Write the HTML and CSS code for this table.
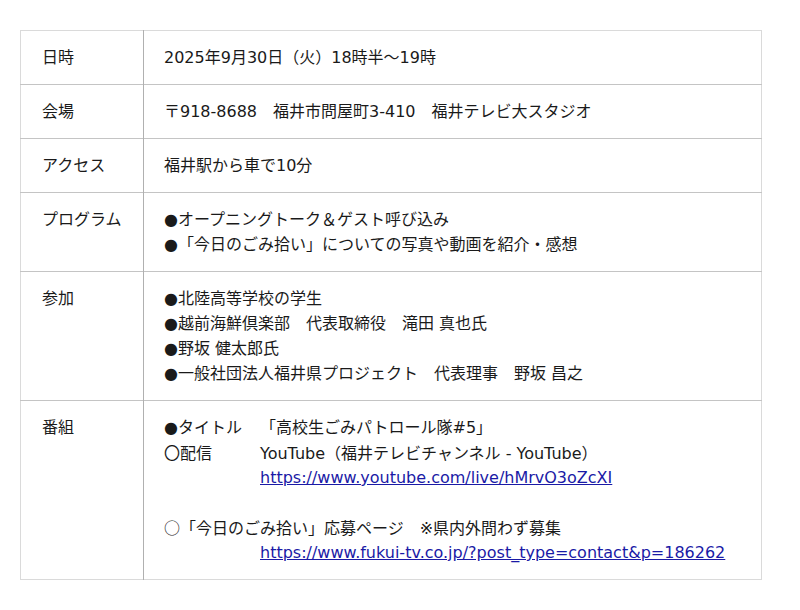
FILE: index.html
```html
<!DOCTYPE html>
<html lang="ja">
<head>
<meta charset="utf-8">
<title>番組概要</title>
<link rel="stylesheet" href="styles.css">
</head>
<body>
<table class="info">
  <tr>
    <th>日時</th>
    <td>2025年9月30日（火）18時半〜19時</td>
  </tr>
  <tr>
    <th>会場</th>
    <td>〒918-8688　福井市問屋町3-410　福井テレビ大スタジオ</td>
  </tr>
  <tr>
    <th>アクセス</th>
    <td>福井駅から車で10分</td>
  </tr>
  <tr>
    <th>プログラム</th>
    <td>●オープニングトーク＆ゲスト呼び込み<br>●「今日のごみ拾い」についての写真や動画を紹介・感想</td>
  </tr>
  <tr>
    <th>参加</th>
    <td>●北陸高等学校の学生<br>●越前海鮮倶楽部　代表取締役　滝田 真也氏<br>●野坂 健太郎氏<br>●一般社団法人福井県プロジェクト　代表理事　野坂 昌之</td>
  </tr>
  <tr>
    <th>番組</th>
    <td>
      <div class="line"><span class="label">●タイトル</span>「高校生ごみパトロール隊#5」</div>
      <div class="line"><span class="label"><span class="cjk">〇</span>配信</span>YouTube（福井テレビチャンネル - YouTube）</div>
      <div class="line indent"><a href="#">https://www.youtube.com/live/hMrvO3oZcXI</a></div>
      <div class="line blank"></div>
      <div class="line"><span class="cjk">○</span>「今日のごみ拾い」応募ページ　※県内外問わず募集</div>
      <div class="line indent"><a href="#">https://www.fukui-tv.co.jp/?post_type=contact&amp;p=186262</a></div>
    </td>
  </tr>
</table>
</body>
</html>
```

FILE: styles.css
```css
html, body {
  margin: 0;
  padding: 0;
  background: #ffffff;
}
body {
  padding: 30px 38px 0 20px;
  font-family: "DejaVu Sans", "Noto Sans CJK JP", sans-serif;
  font-size: 16px;
  line-height: 25px;
  color: #1a1a1a;
}
.info {
  width: 742px;
  border-collapse: collapse;
  border: 1px solid #dadada;
}
.info tr {
  border-bottom: 1px solid #c4c4c4;
}
.info tr:last-child {
  border-bottom: 1px solid #dadada;
}
.info th,
.info td {
  text-align: left;
  vertical-align: top;
  font-weight: normal;
  padding: 14px 20px 14px 20px;
}
.info th {
  width: 81px;
  padding-left: 21px;
  border-right: 1px solid #b0b0b0;
}
.cjk {
  font-family: "Noto Sans CJK JP", sans-serif;
}
.line {
  height: 25px;
  white-space: nowrap;
}
.label {
  display: inline-block;
  width: 96px;
}
.indent {
  padding-left: 96px;
}
a {
  color: #1a1aa6;
  text-decoration: underline;
}
```
